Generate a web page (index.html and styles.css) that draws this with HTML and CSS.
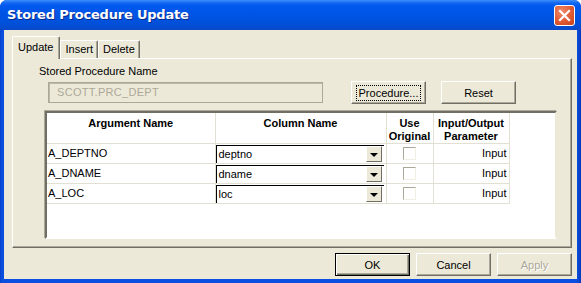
FILE: index.html
```html
<!DOCTYPE html>
<html lang="en">
<head>
    <meta charset="UTF-8">
    <title>Stored Procedure Update</title>
    <link rel="stylesheet" href="styles.css">
</head>
<body>
    <div class="window">
        <div class="titlebar">
            <span class="title">Stored Procedure Update</span>
            <span class="close">
                <svg width="13" height="13" viewBox="0 0 13 13"><path d="M2 2 L11 11 M11 2 L2 11" stroke="#fff" stroke-width="2.2" stroke-linecap="square"/></svg>
            </span>
        </div>

        <div class="client">
            <div class="tabs">
                <div class="tab active">Update</div>
                <div class="tab">Insert</div>
                <div class="tab">Delete</div>
            </div>

            <div class="panel">
                <div class="label">Stored Procedure Name</div>
                <div class="name-row">
                    <div class="field">SCOTT.PRC_DEPT</div>
                    <button class="btn focus"><span>Procedure...</span></button>
                    <button class="btn reset">Reset</button>
                </div>

                <div class="grid">
                    <table>
                        <tr class="head">
                            <th class="c1">Argument Name</th>
                            <th class="c2">Column Name</th>
                            <th class="c3">Use<br>Original</th>
                            <th class="c4">Input/Output<br>Parameter</th>
                        </tr>
                        <tr>
                            <td class="c1">A_DEPTNO</td>
                            <td class="c2"><div class="combo"><span>deptno</span><i class="drop"></i></div></td>
                            <td class="c3"><span class="check"></span></td>
                            <td class="c4">Input</td>
                        </tr>
                        <tr>
                            <td class="c1">A_DNAME</td>
                            <td class="c2"><div class="combo"><span>dname</span><i class="drop"></i></div></td>
                            <td class="c3"><span class="check"></span></td>
                            <td class="c4">Input</td>
                        </tr>
                        <tr>
                            <td class="c1">A_LOC</td>
                            <td class="c2"><div class="combo"><span>loc</span><i class="drop"></i></div></td>
                            <td class="c3"><span class="check"></span></td>
                            <td class="c4">Input</td>
                        </tr>
                    </table>
                </div>
            </div>

            <div class="footer">
                <button class="btn default">OK</button>
                <button class="btn">Cancel</button>
                <button class="btn disabled">Apply</button>
            </div>
        </div>
    </div>
</body>
</html>
```

FILE: styles.css
```css
body {
    margin: 0;
    background: #ffffff;
    font-family: "Liberation Sans", Arial, sans-serif;
    font-size: 11px;
    color: #000;
}

.window {
    width: 581px;
    height: 283px;
    box-sizing: border-box;
    padding: 0 4px 4px;
    display: flex;
    flex-direction: column;
    background: linear-gradient(90deg, #0842c9 0, #0a4fe0 2px, #0a4fe0 577px, #0838b8 581px);
    border-radius: 7px 7px 0 0;
}

.titlebar {
    height: 30px;
    margin: 0 -4px;
    padding: 0 6px 0 7px;
    display: flex;
    align-items: center;
    justify-content: space-between;
    border-radius: 7px 7px 0 0;
    background: linear-gradient(#3d8ffa 0, #1366f2 3px, #0058ee 6px, #0054e3 16px, #0050d8 24px, #0a48c8 30px);
}

.title {
    color: #fff;
    font-family: "DejaVu Sans", sans-serif;
    font-weight: bold;
    font-size: 13px;
    letter-spacing: -0.2px;
    text-shadow: 1px 1px 0 #0a2a8a;
    margin-top: -1px;
}

.close {
    width: 19px;
    height: 19px;
    border: 1px solid #fff;
    border-radius: 3px;
    background: radial-gradient(circle at 35% 30%, #f08a6c, #e05a33 55%, #c8401c);
    display: flex;
    align-items: center;
    justify-content: center;
    margin-top: 1px;
}

.client {
    flex: 1;
    background: #ece9d8;
    display: flex;
    flex-direction: column;
}

.tabs {
    display: flex;
    align-items: flex-end;
    margin: 6px 0 0 8px;
    height: 22px;
    position: relative;
    z-index: 1;
}

.tab {
    height: 17px;
    padding: 0 4px;
    line-height: 17px;
    border-top: 1px solid #fff;
    border-left: 1px solid #fff;
    border-right: 1px solid #716f64;
    box-shadow: inset -1px 0 0 #aca899;
    border-radius: 2px 2px 0 0;
    background: #ece9d8;
}

.tab.active {
    height: 22px;
    line-height: 20px;
    padding: 0 6px 0 5px;
    margin-bottom: -1px;
}

.panel {
    height: 182px;
    margin: 0 5px 0 8px;
    border-top: 1px solid #fff;
    border-left: 1px solid #fff;
    border-right: 1px solid #716f64;
    border-bottom: 1px solid #716f64;
    box-shadow: inset -1px -1px 0 #aca899;
    padding: 6px 0 0 26px;
}

.label {
    line-height: 13px;
    height: 13px;
}

.name-row {
    display: flex;
    align-items: center;
    margin-top: 3px;
    height: 23px;
}

.field {
    width: 265px;
    height: 17px;
    margin-left: 9px;
    padding: 1px 0 1px 8px;
    line-height: 17px;
    color: #aca899;
    border: 1px solid #aca899;
    box-shadow: inset 1px 1px 0 #bcb9aa;
    background: #ece9d8;
    letter-spacing: 0.3px;
}

.btn {
    width: 75px;
    height: 23px;
    padding: 0;
    font-family: "Liberation Sans", Arial, sans-serif;
    font-size: 11px;
    color: #000;
    background: #ece9d8;
    border: none;
    border-top: 1px solid #fff;
    border-left: 1px solid #fff;
    border-right: 1px solid #716f64;
    border-bottom: 1px solid #716f64;
    box-shadow: inset -1px -1px 0 #aca899;
}

.btn.focus {
    margin-left: 28px;
}

.btn.focus span {
    display: inline-block;
    padding: 1px 2px;
    outline: 1px dotted #000;
}

.btn.reset {
    margin-left: 15px;
}

.btn.default {
    border: 1px solid #000;
    box-shadow: inset 1px 1px 0 #fff, inset -1px -1px 0 #716f64, inset -2px -2px 0 #aca899;
}

.btn.disabled {
    color: #aca899;
    text-shadow: 1px 1px 0 #fff;
}

.grid {
    width: 508px;
    height: 124px;
    margin: 7px 0 0 6px;
    background: #fff;
    border-top: 2px solid #716f64;
    border-left: 2px solid #716f64;
    border-right: 2px solid #ece9d8;
    border-bottom: 2px solid #fff;
    box-shadow: -1px -1px 0 #aca899;
}

table {
    border-collapse: collapse;
    table-layout: fixed;
}

th, td {
    padding: 0;
    border-right: 1px solid #e2dfd3;
    border-bottom: 1px solid #e2dfd3;
    white-space: nowrap;
}

th {
    height: 30px;
    vertical-align: top;
    padding-top: 3px;
    box-sizing: border-box;
    line-height: 13px;
    font-size: 11px;
    font-weight: bold;
    text-align: center;
}

.head th {
    border-top: 1px solid #fff;
}

td {
    height: 19px;
    line-height: 19px;
}

.c1 { width: 168px; }
.c2 { width: 170px; }
.c3 { width: 46px; }
.c4 { width: 76px; }

td.c1 {
    padding-left: 1px;
    box-sizing: border-box;
}

td.c3 {
    text-align: center;
}

td.c4 {
    text-align: right;
    padding-right: 2px;
    box-sizing: border-box;
}

.combo {
    height: 18px;
    width: 168px;
    box-sizing: border-box;
    border-top: 1px solid #000;
    border-left: 1px solid #000;
    display: flex;
    align-items: center;
    justify-content: space-between;
    line-height: 16px;
    padding-left: 2px;
}

.drop {
    width: 16px;
    height: 16px;
    box-sizing: border-box;
    background: #ece9d8;
    border-top: 1px solid #fff;
    border-left: 1px solid #fff;
    border-right: 1px solid #716f64;
    border-bottom: 1px solid #716f64;
    position: relative;
    margin-right: 2px;
}

.drop::after {
    content: "";
    position: absolute;
    left: 3px;
    top: 6px;
    border-left: 4px solid transparent;
    border-right: 4px solid transparent;
    border-top: 4px solid #000;
}

.check {
    display: inline-block;
    width: 11px;
    height: 11px;
    vertical-align: middle;
    margin-top: -2px;
    border-top: 1px solid #aca899;
    border-left: 1px solid #aca899;
    border-right: 1px solid #f1efe2;
    border-bottom: 1px solid #f1efe2;
}

.footer {
    display: flex;
    justify-content: flex-end;
    gap: 6px;
    margin: 5px 5px 0 0;
}
```
